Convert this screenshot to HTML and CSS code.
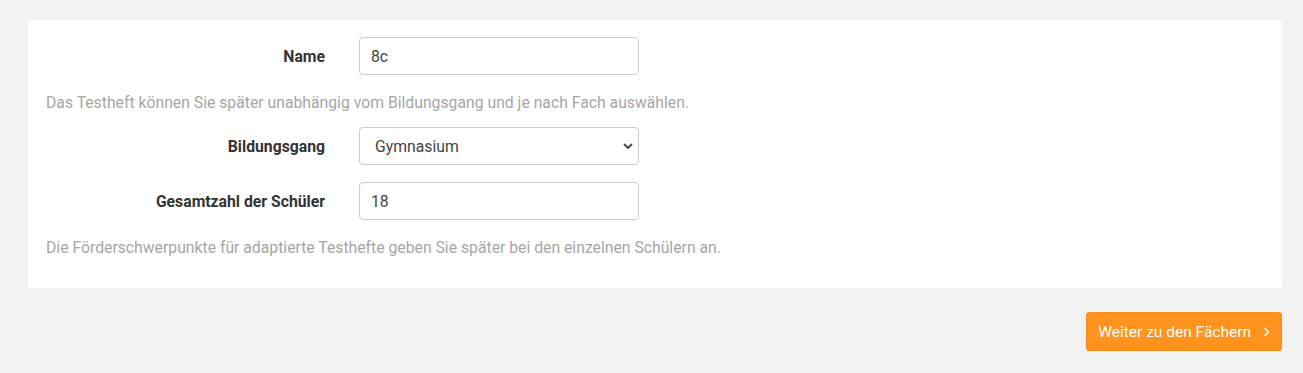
FILE: index.html
```html
<!DOCTYPE html>
<html lang="de">
<head>
<meta charset="utf-8">
<title>Klasse</title>
<link rel="stylesheet" href="styles.css">
</head>
<body>
<div class="page">
  <div class="card">
    <div class="row">
      <label class="label" for="name">Name</label>
      <input class="field" id="name" type="text" value="8c">
    </div>
    <p class="help">Das Testheft können Sie später unabhängig vom Bildungsgang und je nach Fach auswählen.</p>
    <div class="row">
      <label class="label" for="bg">Bildungsgang</label>
      <div class="select-wrap">
        <select class="field select" id="bg">
          <option>Gymnasium</option>
        </select>
        <svg class="caret" width="10" height="7" viewBox="0 0 10 7"><path d="M1.5 1.5 L5 5 L8.5 1.5" fill="none" stroke="#444" stroke-width="1.8" stroke-linecap="round" stroke-linejoin="round"/></svg>
      </div>
    </div>
    <div class="row">
      <label class="label" for="n">Gesamtzahl der Schüler</label>
      <input class="field" id="n" type="text" value="18">
    </div>
    <p class="help">Die Förderschwerpunkte für adaptierte Testhefte geben Sie später bei den einzelnen Schülern an.</p>
  </div>
  <div class="actions">
    <button class="btn" type="button">Weiter zu den Fächern
      <svg class="chev" width="8" height="10" viewBox="0 0 8 10"><path d="M2 1.5 L5.5 5 L2 8.5" fill="none" stroke="#fff" stroke-width="1.6" stroke-linecap="round" stroke-linejoin="round"/></svg>
    </button>
  </div>
</div>
</body>
</html>
```
FILE: styles.css
```css
html, body {
  margin: 0;
  padding: 0;
  background: #f2f2f2;
  font-family: Roboto, "Liberation Sans", sans-serif;
  font-size: 15.75px;
  color: #333;
}
.page {
  padding: 20px 21px 0 28px;
}
.card {
  background: #fff;
  border-radius: 4px;
  padding: 17px 18px 16px;
}
.row {
  display: flex;
  align-items: center;
  margin-bottom: 17px;
}
.label {
  width: 279px;
  text-align: right;
  font-weight: 700;
  color: #333;
  margin-right: 34px;
}
.field {
  box-sizing: border-box;
  width: 280px;
  height: 38px;
  border: 1px solid #ccc;
  border-radius: 4px;
  padding: 0 11px;
  font-family: Roboto, "Liberation Sans", sans-serif;
  font-size: 15.75px;
  color: #444;
  background: #fff;
  outline: none;
}
.select-wrap {
  position: relative;
  width: 280px;
  height: 38px;
}
.select {
  -webkit-appearance: none;
  appearance: none;
  padding-left: 15px;
}
.caret {
  position: absolute;
  right: 6px;
  top: 16px;
  pointer-events: none;
}
.help {
  margin: 0 0 13px;
  line-height: 22px;
  color: #a6a6a6;
  font-size: 15.75px;
}
.actions {
  display: flex;
  justify-content: flex-end;
  margin-top: 24px;
}
.btn {
  display: flex;
  align-items: center;
  height: 39px;
  padding: 0 10px 0 11px;
  background: #ff931e;
  border: 1px solid #f78b14;
  border-radius: 3px;
  color: #fff;
  font-family: Roboto, "Liberation Sans", sans-serif;
  font-size: 15.5px;
  font-weight: 400;
}
.chev {
  margin-left: 12px;
}
```
